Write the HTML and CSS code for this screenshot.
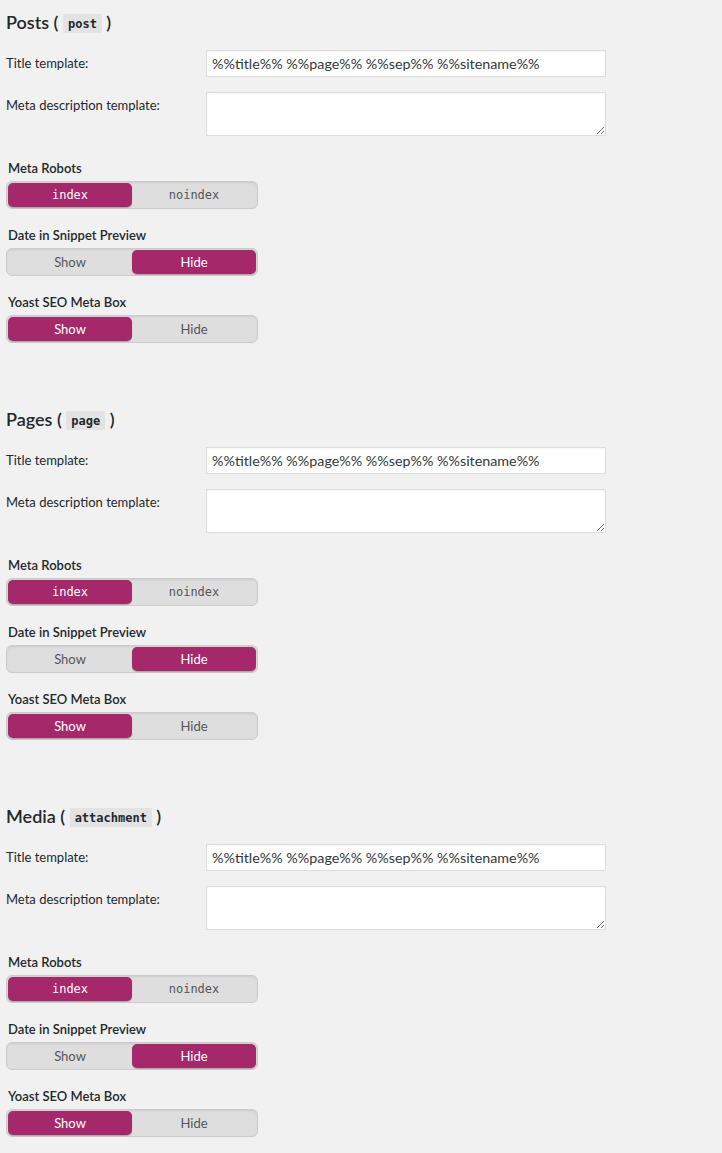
FILE: index.html
```html
<!DOCTYPE html>
<html>
<head>
<meta charset="utf-8">
<link rel="stylesheet" href="styles.css">
</head>
<body>
<div class="page">

  <section class="type">
    <h2 class="type-title">Posts ( <code>post</code> )</h2>
    <div class="field">
      <label class="field-label">Title template:</label>
      <input class="text-input" type="text" value="%%title%% %%page%% %%sep%% %%sitename%%">
    </div>
    <div class="field field-area">
      <label class="field-label">Meta description template:</label>
      <textarea class="text-area"></textarea>
    </div>
    <div class="switch-group first">
      <div class="switch-label">Meta Robots</div>
      <div class="switch mono"><span class="opt on">index</span><span class="opt">noindex</span></div>
    </div>
    <div class="switch-group">
      <div class="switch-label">Date in Snippet Preview</div>
      <div class="switch"><span class="opt">Show</span><span class="opt on">Hide</span></div>
    </div>
    <div class="switch-group">
      <div class="switch-label">Yoast SEO Meta Box</div>
      <div class="switch"><span class="opt on">Show</span><span class="opt">Hide</span></div>
    </div>
  </section>

  <section class="type">
    <h2 class="type-title">Pages ( <code>page</code> )</h2>
    <div class="field">
      <label class="field-label">Title template:</label>
      <input class="text-input" type="text" value="%%title%% %%page%% %%sep%% %%sitename%%">
    </div>
    <div class="field field-area">
      <label class="field-label">Meta description template:</label>
      <textarea class="text-area"></textarea>
    </div>
    <div class="switch-group first">
      <div class="switch-label">Meta Robots</div>
      <div class="switch mono"><span class="opt on">index</span><span class="opt">noindex</span></div>
    </div>
    <div class="switch-group">
      <div class="switch-label">Date in Snippet Preview</div>
      <div class="switch"><span class="opt">Show</span><span class="opt on">Hide</span></div>
    </div>
    <div class="switch-group">
      <div class="switch-label">Yoast SEO Meta Box</div>
      <div class="switch"><span class="opt on">Show</span><span class="opt">Hide</span></div>
    </div>
  </section>

  <section class="type">
    <h2 class="type-title">Media ( <code>attachment</code> )</h2>
    <div class="field">
      <label class="field-label">Title template:</label>
      <input class="text-input" type="text" value="%%title%% %%page%% %%sep%% %%sitename%%">
    </div>
    <div class="field field-area">
      <label class="field-label">Meta description template:</label>
      <textarea class="text-area"></textarea>
    </div>
    <div class="switch-group first">
      <div class="switch-label">Meta Robots</div>
      <div class="switch mono"><span class="opt on">index</span><span class="opt">noindex</span></div>
    </div>
    <div class="switch-group">
      <div class="switch-label">Date in Snippet Preview</div>
      <div class="switch"><span class="opt">Show</span><span class="opt on">Hide</span></div>
    </div>
    <div class="switch-group">
      <div class="switch-label">Yoast SEO Meta Box</div>
      <div class="switch"><span class="opt on">Show</span><span class="opt">Hide</span></div>
    </div>
  </section>

</div>
</body>
</html>
```

FILE: styles.css
```css
html, body {
  margin: 0;
  padding: 0;
  background: #f1f1f1;
}

body {
  font-family: "Segoe UI", Lato, "Noto Sans", sans-serif;
  font-size: 13px;
  color: #23282d;
}

.page {
  padding: 10px 6px 0 6px;
}

.type {
  margin-bottom: 64px;
}

.type-title {
  margin: 0 0 16px 0;
  height: 24px;
  display: flex;
  align-items: center;
  white-space: pre;
  font-size: 18px;
  line-height: 24px;
  font-weight: 600;
  color: #23282d;
}

.type-title code {
  display: inline-block;
  font-family: "DejaVu Sans Mono", "Liberation Mono", monospace;
  font-size: 12px;
  line-height: 14px;
  font-weight: 700;
  background: #e3e3e3;
  padding: 3px 5px 2px 5px;
  margin-top: 2px;
  color: #23282d;
}

.field {
  display: flex;
  align-items: flex-start;
}

.field-area {
  margin-top: 15px;
}

.field-label {
  width: 200px;
  flex: none;
  line-height: 27px;
  color: #23282d;
}

.text-input,
.text-area {
  box-sizing: border-box;
  width: 400px;
  margin: 0;
  border: 1px solid #dddddd;
  background: #fff;
  box-shadow: inset 0 1px 2px rgba(0,0,0,0.04);
  font-family: "Segoe UI", Lato, "Noto Sans", sans-serif;
  font-size: 14.3px;
  color: #32373c;
  outline: none;
}

.text-input {
  height: 27px;
  padding: 0 5px;
}

.text-area {
  display: block;
  height: 44px;
  padding: 4px 5px;
  resize: vertical;
}

.switch-group {
  margin-bottom: 16px;
}

.switch-group.first {
  margin-top: 22px;
}

.switch-label {
  padding-left: 2px;
  font-weight: 600;
  line-height: 20px;
  margin-bottom: 3px;
  color: #23282d;
}

.switch {
  box-sizing: border-box;
  width: 252px;
  height: 28px;
  padding: 1px;
  display: flex;
  border: 1px solid #cccccc;
  border-radius: 6px;
  background: #dedede;
  box-shadow: inset 0 1px 2px rgba(0,0,0,0.08);
}

.opt {
  flex: 1;
  display: flex;
  align-items: center;
  justify-content: center;
  border-radius: 5px;
  color: #555;
  font-size: 13px;
}

.opt.on {
  background: #a4286a;
  color: #fff;
  box-shadow: 0 1px 1px rgba(0,0,0,0.25);
}

.switch.mono .opt {
  font-family: "DejaVu Sans Mono", "Liberation Mono", monospace;
  font-size: 12px;
}
```
